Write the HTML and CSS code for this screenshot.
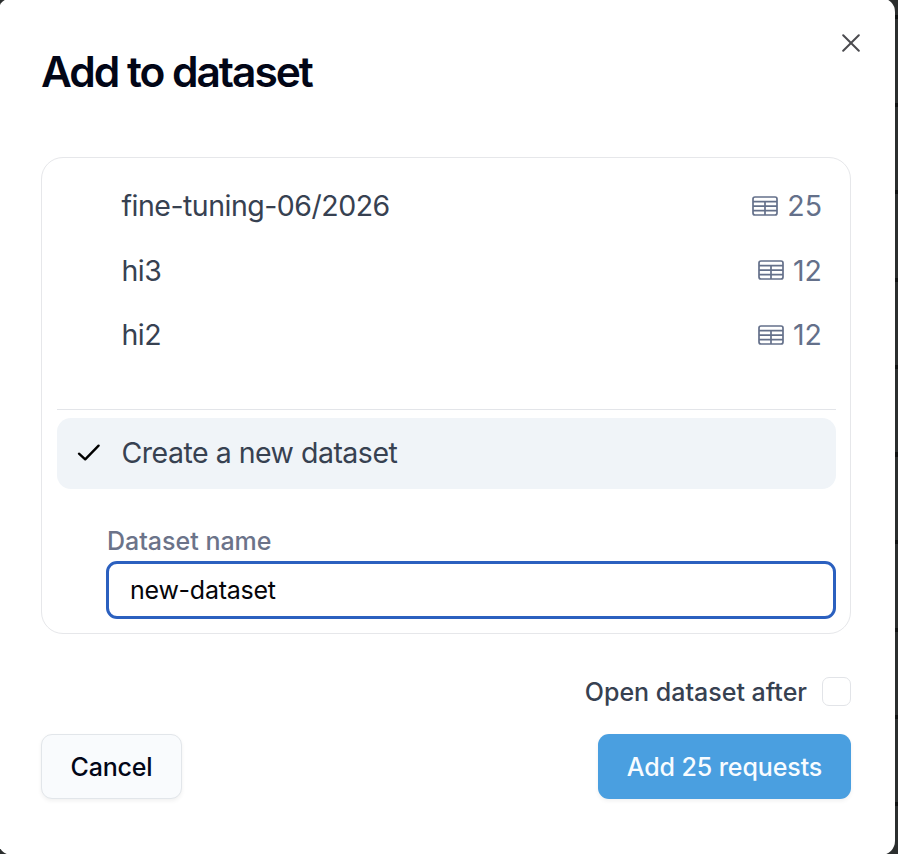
FILE: index.html
```html
<!DOCTYPE html>
<html lang="en">
<head>
<meta charset="utf-8">
<title>Add to dataset</title>
<link rel="stylesheet" href="styles.css">
</head>
<body>
<svg class="symbols" aria-hidden="true">
  <symbol id="table" viewBox="0 0 26 20">
    <rect x="1" y="1" width="24" height="18" rx="2"/>
    <path d="M1 5.7H25M1 10.2H25M1 14.6H25M13 5.7V19"/>
  </symbol>
</svg>
<main class="dialog" role="dialog" aria-labelledby="title">
  <header class="header">
    <h1 class="title" id="title">Add to dataset</h1>
    <button class="close" aria-label="Close">
      <svg viewBox="0 0 18 18"><path d="M1.2 1.2L16.8 16.8M16.8 1.2L1.2 16.8"/></svg>
    </button>
  </header>
  <section class="card">
    <ul class="list">
      <li class="item"><span class="name">fine-tuning-06/2026</span><span class="count"><svg class="table"><use href="#table"/></svg>25</span></li>
      <li class="item"><span class="name">hi3</span><span class="count"><svg class="table"><use href="#table"/></svg>12</span></li>
      <li class="item"><span class="name">hi2</span><span class="count"><svg class="table"><use href="#table"/></svg>12</span></li>
    </ul>
    <div class="create">
      <svg class="check" viewBox="0 0 24 18"><path d="M2 9.7L8.2 15.3L21.6 1.7"/></svg>
      <span class="name">Create a new dataset</span>
    </div>
    <div class="field">
      <label class="label" for="name">Dataset name</label>
      <input class="input" id="name" type="text" value="new-dataset">
    </div>
  </section>
  <label class="after"><span>Open dataset after</span><input class="checkbox" type="checkbox"></label>
  <footer class="footer">
    <button class="button cancel">Cancel</button>
    <button class="button submit">Add 25 requests</button>
  </footer>
</main>
</body>
</html>
```
FILE: styles.css
```css
* { box-sizing: border-box; }
body {
  margin: 0;
  height: 854px;
  overflow: hidden;
  background: repeating-linear-gradient(#2b2e2e 0 15px, #101212 15px 19px, #2b2e2e 19px 87.5px);
  font-family: Inter, "Liberation Sans", sans-serif;
  white-space: nowrap;
}
.symbols { display: block; width: 0; height: 0; }
.dialog {
  width: 896.5px;
  height: 857px;
  margin: -2px 0 0 -2px;
  padding: 0 43.5px 0 43px;
  border-radius: 14px;
  background: #fff;
}
.header {
  display: flex;
  justify-content: space-between;
  height: 159px;
}
.title {
  margin: 49px 0 0;
  font-size: 42.5px;
  line-height: 50px;
  font-weight: 600;
  letter-spacing: -2.03px;
  color: #020617;
}
.close {
  width: 18px;
  height: 18px;
  margin: 35.5px -9px 0 0;
  padding: 0;
  border: 0;
  background: none;
}
.close svg { display: block; width: 18px; height: 18px; fill: none; stroke: #4b4b4f; stroke-width: 2; stroke-linecap: round; }
.card {
  height: 477px;
  padding: 15px 14px 15px 15px;
  border: 1px solid #e6e7ea;
  border-radius: 22px;
}
.list {
  height: 237px;
  margin: 0;
  padding: .4px 0 0;
  list-style: none;
  border-bottom: 1px solid #e3e5e9;
}
.item {
  display: flex;
  align-items: center;
  justify-content: space-between;
  height: 64.5px;
  padding: 0 14px 0 64.5px;
  font-size: 28.5px;
  color: #374151;
}
.name { letter-spacing: -.5px; }
.count { display: flex; align-items: center; gap: 9px; color: #64708a; }
.table { width: 26px; height: 20px; fill: none; stroke: #64708a; stroke-width: 1.7; }
.create {
  display: flex;
  align-items: center;
  height: 71px;
  margin-top: 8px;
  padding: 0 0 2px 20px;
  gap: 20.5px;
  border-radius: 14px;
  background: #f0f4f8;
  font-size: 28.5px;
  color: #374151;
}
.check { width: 24px; height: 18px; fill: none; stroke: #000; stroke-width: 2.4; stroke-linecap: round; stroke-linejoin: round; }
.field { margin: 37px 0 0 49px; }
.label {
  display: block;
  height: 35px;
  padding-left: 1px;
  font-size: 25px;
  line-height: 31px;
  font-weight: 500;
  color: #6b7389;
}
.input {
  display: block;
  width: 100%;
  height: 58px;
  padding: 0 21px;
  border: 3px solid #2b60bf;
  border-radius: 11px;
  outline: 0;
  background: #fff;
  font: 400 25px Inter, sans-serif;
  letter-spacing: -.25px;
  color: #050509;
}
.after {
  display: flex;
  align-items: center;
  justify-content: flex-end;
  gap: 15px;
  height: 29px;
  margin-top: 43px;
  font-size: 25px;
  font-weight: 500;
  color: #374151;
}
.checkbox {
  appearance: none;
  width: 29px;
  height: 29px;
  margin: 0;
  border: 1px solid #e2e4e8;
  border-radius: 7px;
  background: #fff;
}
.footer { display: flex; justify-content: space-between; margin-top: 28px; }
.button {
  height: 65px;
  padding: 0;
  border-radius: 11px;
  font: 500 25px Inter, sans-serif;
  letter-spacing: -.1px;
  box-shadow: 0 2px 4px rgba(0, 0, 0, .06);
}
.cancel { width: 141px; border: 1px solid #e2e6ea; background: #f9fbfd; color: #020617; letter-spacing: -.2px; }
.submit { width: 253px; border: 0; background: #4a9fe0; color: #f8fcff; }
```
